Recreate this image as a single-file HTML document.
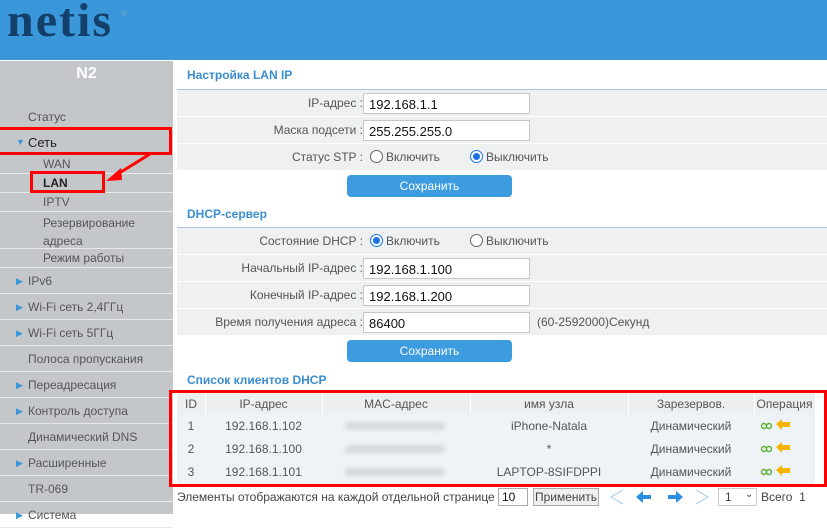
<!DOCTYPE html>
<html><head><meta charset="utf-8"><style>
*{margin:0;padding:0;box-sizing:border-box}
body{width:827px;height:514px;overflow:hidden;background:#fff;font-family:"Liberation Sans",Arial,sans-serif;font-size:12px;color:#555;position:relative}
.a{position:absolute}
#hdr{left:0;top:0;width:827px;height:60px;background:#3a97d9}
#logo{left:7px;top:-7px;font-family:"Liberation Serif",serif;font-weight:bold;font-size:48px;color:#133f6b;letter-spacing:2px}
#side{left:0;top:61px;width:173px;height:453px;background:#c4c7ca}
.si{position:absolute;left:0;width:173px;border-bottom:1px solid #e8e9ea;color:#555;font-size:12px}
.tri{color:#3a97d9;font-size:9px;position:absolute;left:16px}
.t{position:absolute;color:#3a8dd0;font-weight:bold;font-size:12px;left:187px}
.ln{position:absolute;left:177px;width:650px;height:1px;background:#a9c6dc}
.row{position:absolute;left:177px;width:650px;height:26px;background:#eef0f1}
.lab{position:absolute;right:464px;top:6px;color:#555;text-align:right;white-space:nowrap}
.inp{position:absolute;left:186px;top:3px;width:167px;height:21px;border:1px solid #c8c8c8;background:#fff;color:#111;font-size:13px;padding:3px 0 0 5px}
.rad{position:absolute;top:6px;width:13px;height:13px;border:1px solid #666;border-radius:50%;background:#fff}
.rad.on{border-color:#1a73e8}
.rad.on:after{content:"";position:absolute;left:2px;top:2px;width:7px;height:7px;border-radius:50%;background:#1a73e8}
.rl{position:absolute;top:6px;color:#555}
.btn{position:absolute;left:347px;width:165px;height:22px;background:#3d9be0;border-radius:4px;color:#fff;text-align:center;line-height:22px;font-size:12px}
.td{position:absolute;text-align:center;color:#555}
.mac{position:absolute;left:345px;width:100px;height:8px;background:#d5d9dd;filter:blur(2px);border-radius:4px}
.red{position:absolute;border:3px solid #f00}
</style></head><body>
<div class="a" id="hdr"></div>
<div class="a" id="logo">netis</div>
<div class="a" style="left:121px;top:11px;font-size:7px;color:#7ab">®</div>
<div class="a" id="side">
<div class="a" style="left:0;top:4px;width:173px;text-align:center;color:#fff;font-weight:bold;font-size:16px">N2</div>
<div class="si" style="top:42px;height:26px;padding:7px 0 0 28px">Статус</div>
<div class="si" style="top:68px;height:26px;padding:6px 0 0 28px;color:#222;font-size:13px"><span class="tri" style="top:8px">▼</span>Сеть</div>
<div class="si" style="top:94px;height:19px;padding:2px 0 0 43px">WAN</div>
<div class="si" style="top:113px;height:19px;padding:2px 0 0 43px;color:#222;font-weight:bold">LAN</div>
<div class="si" style="top:132px;height:19px;padding:2px 0 0 43px">IPTV</div>
<div class="si" style="top:151px;height:37px;padding:2px 0 0 43px;line-height:18px">Резервирование<br>адреса</div>
<div class="si" style="top:188px;height:19px;padding:2px 0 0 43px">Режим работы</div>
<div class="si" style="top:207px;height:26px;padding:6px 0 0 28px"><span class="tri" style="top:8px">▶</span>IPv6</div>
<div class="si" style="top:233px;height:26px;padding:6px 0 0 28px"><span class="tri" style="top:8px">▶</span>Wi-Fi сеть 2,4ГГц</div>
<div class="si" style="top:259px;height:26px;padding:6px 0 0 28px"><span class="tri" style="top:8px">▶</span>Wi-Fi сеть 5ГГц</div>
<div class="si" style="top:285px;height:26px;padding:6px 0 0 28px">Полоса пропускания</div>
<div class="si" style="top:311px;height:26px;padding:6px 0 0 28px"><span class="tri" style="top:8px">▶</span>Переадресация</div>
<div class="si" style="top:337px;height:26px;padding:6px 0 0 28px"><span class="tri" style="top:8px">▶</span>Контроль доступа</div>
<div class="si" style="top:363px;height:26px;padding:6px 0 0 28px">Динамический DNS</div>
<div class="si" style="top:389px;height:26px;padding:6px 0 0 28px"><span class="tri" style="top:8px">▶</span>Расширенные</div>
<div class="si" style="top:415px;height:26px;padding:6px 0 0 28px">TR-069</div>
<div class="si" style="top:441px;height:26px;padding:6px 0 0 28px"><span class="tri" style="top:8px">▶</span>Система</div>
</div>
<div class="red" style="left:-3px;top:127px;width:175px;height:28px"></div>
<div class="red" style="left:30px;top:171px;width:75px;height:22px"></div>
<svg class="a" style="left:0;top:0" width="200" height="200"><line x1="150" y1="154" x2="116" y2="175" stroke="#f00" stroke-width="3"/><polygon points="106,181 121,168 122,180" fill="#f00"/></svg>

<div class="t" style="top:68px">Настройка LAN IP</div>
<div class="ln" style="top:89px"></div>
<div class="row" style="top:90px"><div class="lab">IP-адрес :</div><div class="inp">192.168.1.1</div></div>
<div class="row" style="top:117px"><div class="lab">Маска подсети :</div><div class="inp">255.255.255.0</div></div>
<div class="row" style="top:144px"><div class="lab">Статус STP :</div><div class="rad" style="left:193px"></div><div class="rl" style="left:209px">Включить</div><div class="rad on" style="left:293px"></div><div class="rl" style="left:309px">Выключить</div></div>
<div class="btn" style="top:175px">Сохранить</div>
<div class="t" style="top:207px">DHCP-сервер</div>
<div class="ln" style="top:227px"></div>
<div class="row" style="top:228px"><div class="lab">Состояние DHCP :</div><div class="rad on" style="left:193px"></div><div class="rl" style="left:209px">Включить</div><div class="rad" style="left:293px"></div><div class="rl" style="left:309px">Выключить</div></div>
<div class="row" style="top:255px"><div class="lab">Начальный IP-адрес :</div><div class="inp">192.168.1.100</div></div>
<div class="row" style="top:282px"><div class="lab">Конечный IP-адрес :</div><div class="inp">192.168.1.200</div></div>
<div class="row" style="top:309px"><div class="lab">Время получения адреса :</div><div class="inp">86400</div></div>
<div class="a" style="left:537px;top:315px;color:#555">(60-2592000)Секунд</div>
<div class="btn" style="top:340px">Сохранить</div>
<div class="t" style="top:373px">Список клиентов DHCP</div>

<div class="a" style="left:177px;top:393px;width:638px;height:21px;background:#eceeef"></div>
<div class="a" style="left:177px;top:414px;width:638px;height:70px;background:#eef3f8"></div>
<div class="a" style="left:205px;top:393px;width:1px;height:21px;background:#fff"></div>
<div class="a" style="left:322px;top:393px;width:1px;height:21px;background:#fff"></div>
<div class="a" style="left:470px;top:393px;width:1px;height:21px;background:#fff"></div>
<div class="a" style="left:628px;top:393px;width:1px;height:21px;background:#fff"></div>
<div class="a" style="left:754px;top:393px;width:1px;height:21px;background:#fff"></div>
<div class="td" style="left:177px;width:28px;top:397px">ID</div>
<div class="td" style="left:205px;width:117px;top:397px">IP-адрес</div>
<div class="td" style="left:322px;width:148px;top:397px">MAC-адрес</div>
<div class="td" style="left:470px;width:158px;top:397px">имя узла</div>
<div class="td" style="left:628px;width:126px;top:397px">Зарезервов.</div>
<div class="td" style="left:754px;width:61px;top:397px">Операция</div>

<div class="td" style="left:177px;width:28px;top:419px">1</div>
<div class="td" style="left:205px;width:117px;top:419px">192.168.1.102</div>
<div class="mac" style="top:422px"></div>
<div class="td" style="left:470px;width:158px;top:419px">iPhone-Natala</div>
<div class="td" style="left:628px;width:126px;top:419px">Динамический</div>
<div class="td" style="left:177px;width:28px;top:442px">2</div>
<div class="td" style="left:205px;width:117px;top:442px">192.168.1.100</div>
<div class="mac" style="top:445px"></div>
<div class="td" style="left:470px;width:158px;top:442px">*</div>
<div class="td" style="left:628px;width:126px;top:442px">Динамический</div>
<div class="td" style="left:177px;width:28px;top:465px">3</div>
<div class="td" style="left:205px;width:117px;top:465px">192.168.1.101</div>
<div class="mac" style="top:468px"></div>
<div class="td" style="left:470px;width:158px;top:465px">LAPTOP-8SIFDPPI</div>
<div class="td" style="left:628px;width:126px;top:465px">Динамический</div>
<svg class="a" style="left:760px;top:418px" width="40" height="62">
<g fill="none" stroke="#5bb030" stroke-width="1.4"><circle cx="4" cy="8" r="2.5"/><circle cx="9" cy="8" r="2.5"/><circle cx="4" cy="31" r="2.5"/><circle cx="9" cy="31" r="2.5"/><circle cx="4" cy="54" r="2.5"/><circle cx="9" cy="54" r="2.5"/></g>
<g fill="#f5b400"><polygon points="16,6 22,1 22,4 30,4 30,9 22,9 22,12"/><polygon points="16,29 22,24 22,27 30,27 30,32 22,32 22,35"/><polygon points="16,52 22,47 22,50 30,50 30,55 22,55 22,58"/></g>
</svg>
<div class="red" style="left:169px;top:390px;width:658px;height:97px"></div>

<div class="a" style="left:177px;top:490px;color:#444;font-size:12px">Элементы отображаются на каждой отдельной странице</div>
<div class="a" style="left:498px;top:488px;width:30px;height:18px;border:1px solid #aaa;background:#fff;color:#111;padding:1px 0 0 3px">10</div>
<div class="a" style="left:533px;top:488px;width:66px;height:18px;border:1px solid #aaa;background:#efefef;color:#444;text-align:center;line-height:16px">Применить</div>
<svg class="a" style="left:606px;top:487px" width="110" height="20">
<polyline points="17,3 5,10 17,17" fill="none" stroke="#9ccbef" stroke-width="1"/>
<polygon points="30,10 37,4 37,8 45,8 45,12 37,12 37,16" fill="#2b8ee0"/>
<polygon points="77,10 70,4 70,8 62,8 62,12 70,12 70,16" fill="#2b8ee0"/>
<polyline points="90,3 102,10 90,17" fill="none" stroke="#9ccbef" stroke-width="1"/>
</svg>
<div class="a" style="left:718px;top:488px;width:39px;height:18px;border:1px solid #ccc;background:#fff;color:#444;padding:1px 0 0 6px">1 <span style="position:absolute;left:26px;top:0;font-size:10px">&#8964;</span></div>
<div class="a" style="left:761px;top:490px;color:#444">Всего &nbsp;1</div>
</body></html>
